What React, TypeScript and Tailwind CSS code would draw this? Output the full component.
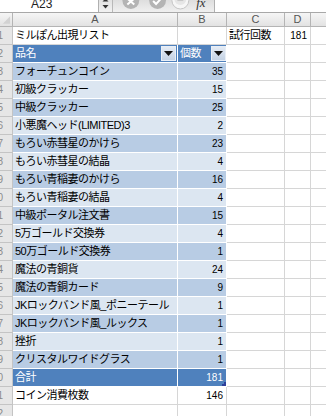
import React from "react";

type Item = { name: string; count: number };

const items: Item[] = [
  { name: "フォーチュンコイン", count: 35 },
  { name: "初級クラッカー", count: 15 },
  { name: "中級クラッカー", count: 25 },
  { name: "小悪魔ヘッド(LIMITED)3", count: 2 },
  { name: "もろい赤彗星のかけら", count: 23 },
  { name: "もろい赤彗星の結晶", count: 4 },
  { name: "もろい青稲妻のかけら", count: 16 },
  { name: "もろい青稲妻の結晶", count: 4 },
  { name: "中級ポータル注文書", count: 15 },
  { name: "5万ゴールド交換券", count: 4 },
  { name: "50万ゴールド交換券", count: 1 },
  { name: "魔法の青銅貨", count: 24 },
  { name: "魔法の青銅カード", count: 9 },
  { name: "JKロックバンド風_ポニーテール", count: 1 },
  { name: "JKロックバンド風_ルックス", count: 1 },
  { name: "挫折", count: 1 },
  { name: "クリスタルワイドグラス", count: 1 },
];

const jp = { fontFamily: '"Liberation Sans", "Noto Sans CJK JP", sans-serif' };
const num = { fontFamily: '"Liberation Sans", Arial, sans-serif' };

function RowHead({ n }: { n: number }) {
  return (
    <div
      className="w-[13px] shrink-0 overflow-hidden border-r border-b border-[#c4c4c4] bg-[#e6e6e6] flex items-center justify-end pr-[9px] text-[10px] text-[#8a8a8a] whitespace-nowrap"
      style={num}
    >
      {n}
    </div>
  );
}

function Grid() {
  return (
    <>
      <div className="w-[58px] shrink-0 border-r border-b border-[#d6d6d6]" />
      <div className="w-[26px] shrink-0 border-r border-b border-[#d6d6d6]" />
      <div className="flex-1 border-b border-[#d6d6d6]" />
    </>
  );
}

function DropButton() {
  return (
    <div className="w-[15px] h-[15px] shrink-0 border border-[#e8eef6] bg-gradient-to-b from-[#e4ebf4] to-[#c4d2e4] flex items-center justify-center">
      <svg width="9" height="5" viewBox="0 0 9 5">
        <path d="M0 0h9L4.5 5z" fill="#111" />
      </svg>
    </div>
  );
}

function Toolbar() {
  return (
    <div className="flex h-[13px] border-b border-[#a8a8a8] overflow-hidden">
      <div className="w-[99px] shrink-0 bg-white border-r border-[#b0b0b0] relative overflow-hidden">
        <span className="absolute left-[31px] top-[-5px] text-[12px] text-[#222]" style={num}>
          A23
        </span>
      </div>
      <div className="w-[14px] shrink-0 bg-gradient-to-b from-[#e2e2e2] to-[#f2f2f2] border-r border-[#b8b8b8] flex justify-center">
        <svg width="7" height="12" viewBox="0 0 7 12">
          <path d="M0.5 1.5h6L3.5 -1.5z" fill="#333" />
          <path d="M0.5 5h6L3.5 8.5z" fill="#333" />
        </svg>
      </div>
      <div className="w-[102px] shrink-0 bg-gradient-to-b from-[#dedede] to-[#f0f0f0] border-r border-[#b0b0b0] flex">
        <svg width="102" height="12" viewBox="0 0 102 12">
          <circle cx="18" cy="0.5" r="8.5" fill="#b4b4b4" />
          <path d="M14.5 -1.5l7 6M21.5 -1.5l-7 6" stroke="#fff" strokeWidth="2" />
          <circle cx="45" cy="0.5" r="8.5" fill="#b4b4b4" />
          <path d="M40.5 1l3 3 5.5 -6" stroke="#fff" strokeWidth="2" fill="none" />
          <circle cx="68" cy="0.5" r="8.5" fill="#f6f6f6" stroke="#c4c4c4" />
          <circle cx="68" cy="-1" r="6" fill="#e6e6e6" />
          <rect x="65" y="-1" width="6" height="2" fill="#c8c8c8" />
          <text x="84" y="7" fontFamily="Liberation Serif, serif" fontStyle="italic" fontSize="13" fill="#333">
            fx
          </text>
        </svg>
      </div>
      <div className="flex-1 bg-white" />
    </div>
  );
}

function ColumnHeader() {
  const cell =
    "shrink-0 border-r border-[#b4b4b4] flex items-center justify-center text-[11px] text-[#555]";
  return (
    <div
      className="flex h-[14px] border-b border-[#b4b4b4] bg-gradient-to-b from-[#f6f6f6] to-[#e2e2e2]"
      style={num}
    >
      <div className={`w-[13px] ${cell} items-end justify-end`}>
        <svg width="13" height="13" viewBox="0 0 13 13">
          <path d="M3 11L11 3v8z" fill="#d2d2d2" />
        </svg>
      </div>
      <div className={`w-[165px] ${cell}`}>A</div>
      <div className={`w-[49px] ${cell}`}>B</div>
      <div className={`w-[58px] ${cell}`}>C</div>
      <div className={`w-[26px] ${cell}`}>D</div>
      <div className="flex-1" />
    </div>
  );
}

export default function App() {
  return (
    <div className="w-[326px] h-[416px] overflow-hidden bg-white select-none">
      <Toolbar />
      <ColumnHeader />

      {/* row 1: title and trial count */}
      <div className="flex h-[18px] text-[11px] text-black">
        <RowHead n={1} />
        <div
          className="w-[165px] shrink-0 border-r border-b border-[#d6d6d6] flex items-center pl-[2px] tracking-[-0.5px] whitespace-nowrap"
          style={jp}
        >
          ミルぽん出現リスト
        </div>
        <div className="w-[49px] shrink-0 border-r border-b border-[#d6d6d6]" />
        <div
          className="w-[58px] shrink-0 border-r border-b border-[#d6d6d6] flex items-center pl-[2px] tracking-[-0.5px] whitespace-nowrap"
          style={jp}
        >
          試行回数
        </div>
        <div
          className="w-[26px] shrink-0 border-r border-b border-[#d6d6d6] flex items-center justify-end pr-[3px] text-[10px]"
          style={num}
        >
          181
        </div>
        <div className="flex-1 border-b border-[#d6d6d6]" />
      </div>

      {/* row 2: table header */}
      <div className="flex h-[18px] text-[11px]">
        <RowHead n={2} />
        <div
          className="w-[165px] shrink-0 border-r border-b border-white bg-[#4f81bd] flex items-center justify-between pl-[2px] pr-[1px] text-white tracking-[-0.5px]"
          style={jp}
        >
          <span>品名</span>
          <DropButton />
        </div>
        <div
          className="w-[49px] shrink-0 border-r border-b border-white bg-[#4f81bd] flex items-center justify-between pl-[2px] text-white tracking-[-0.5px]"
          style={jp}
        >
          <span>個数</span>
          <DropButton />
        </div>
        <Grid />
      </div>

      {items.map((it, i) => {
        const band = i % 2 === 0 ? "bg-[#b8cce4]" : "bg-[#dce6f1]";
        return (
          <div key={it.name} className="flex h-[18px] text-[11px] text-black">
            <RowHead n={i + 3} />
            <div
              className={`w-[165px] shrink-0 border-r border-b border-white ${band} flex items-center pl-[2px] tracking-[-0.5px] whitespace-nowrap overflow-hidden`}
              style={jp}
            >
              {it.name}
            </div>
            <div
              className={`w-[49px] shrink-0 border-r border-b border-white ${band} flex items-center justify-end pr-[3px] text-[10px]`}
              style={num}
            >
              {it.count}
            </div>
            <Grid />
          </div>
        );
      })}

      {/* row 20: totals */}
      <div className="flex h-[18px] text-[11px] text-white">
        <RowHead n={20} />
        <div
          className="w-[165px] shrink-0 border-r border-b border-white bg-[#4f81bd] flex items-center pl-[2px] tracking-[-0.5px]"
          style={jp}
        >
          合計
        </div>
        <div
          className="w-[49px] shrink-0 border-r border-b border-white bg-[#4f81bd] flex items-center justify-end pr-[3px] text-[10px] relative"
          style={num}
        >
          181
          <div className="absolute right-0 bottom-0 w-[4px] h-[4px] border-r-2 border-b-2 border-[#2e3f9a]" />
        </div>
        <Grid />
      </div>

      {/* row 21: coins spent */}
      <div className="flex h-[18px] text-[11px] text-black">
        <RowHead n={21} />
        <div
          className="w-[165px] shrink-0 border-r border-b border-[#d6d6d6] flex items-center pl-[2px] tracking-[-0.5px]"
          style={jp}
        >
          コイン消費枚数
        </div>
        <div
          className="w-[49px] shrink-0 border-r border-b border-[#d6d6d6] flex items-center justify-end pr-[3px] text-[10px]"
          style={num}
        >
          146
        </div>
        <Grid />
      </div>

      {/* row 22 */}
      <div className="flex h-[18px] text-[11px]">
        <RowHead n={22} />
        <div className="w-[165px] shrink-0 border-r border-b border-[#d6d6d6]" />
        <div className="w-[49px] shrink-0 border-r border-b border-[#d6d6d6]" />
        <Grid />
      </div>
    </div>
  );
}
